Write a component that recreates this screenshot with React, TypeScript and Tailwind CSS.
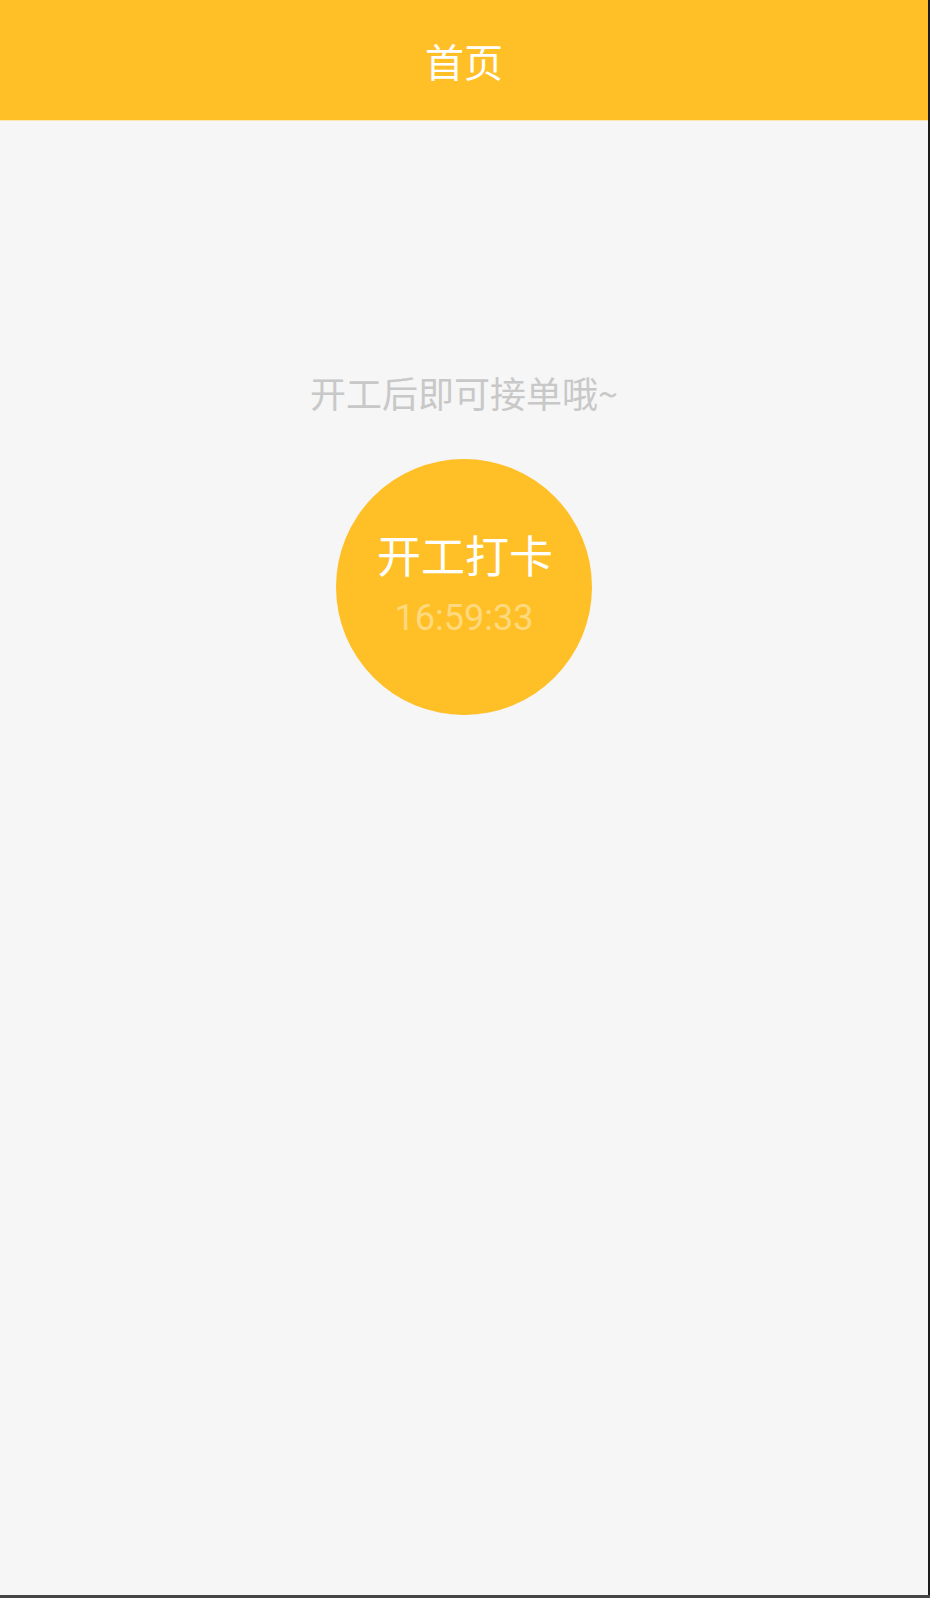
export default function App() {
  return (
    <div className="w-[930px] h-[1598px] flex flex-col bg-[#454545]" style={{ fontFamily: '"Noto Sans CJK SC", "Noto Sans", sans-serif' }}>
      <div className="flex h-[1595px]">
        <div className="w-[928px] h-full bg-[#f6f6f6] flex flex-col">
          <header className="h-[120px] bg-[#ffbf27] flex items-center justify-center pt-[1px]">
            <span className="text-white text-[39px] leading-[39px]">首页</span>
          </header>
          <div className="h-px bg-[#fbe6b2]" />
          <div className="flex flex-col items-center">
            <p className="mt-[253px] text-[36px] leading-[36px] text-[#c8c8c8]">开工后即可接单哦~</p>
            <div className="mt-[49px] w-[256px] h-[256px] rounded-full bg-[#ffbf27] flex flex-col items-center justify-center pb-[6px]">
              <span className="text-white text-[44px] leading-[44px] pl-[2px]">开工打卡</span>
              <span className="mt-[24px] text-[36px] leading-[36px] text-[#ffd97d]" style={{ fontFamily: 'Roboto, "Noto Sans", sans-serif' }}>16:59:33</span>
            </div>
          </div>
        </div>
        <div className="w-[2px] h-full bg-[#1c1c1c]" />
      </div>
      <div className="h-[3px] bg-[#454545]" />
    </div>
  );
}
